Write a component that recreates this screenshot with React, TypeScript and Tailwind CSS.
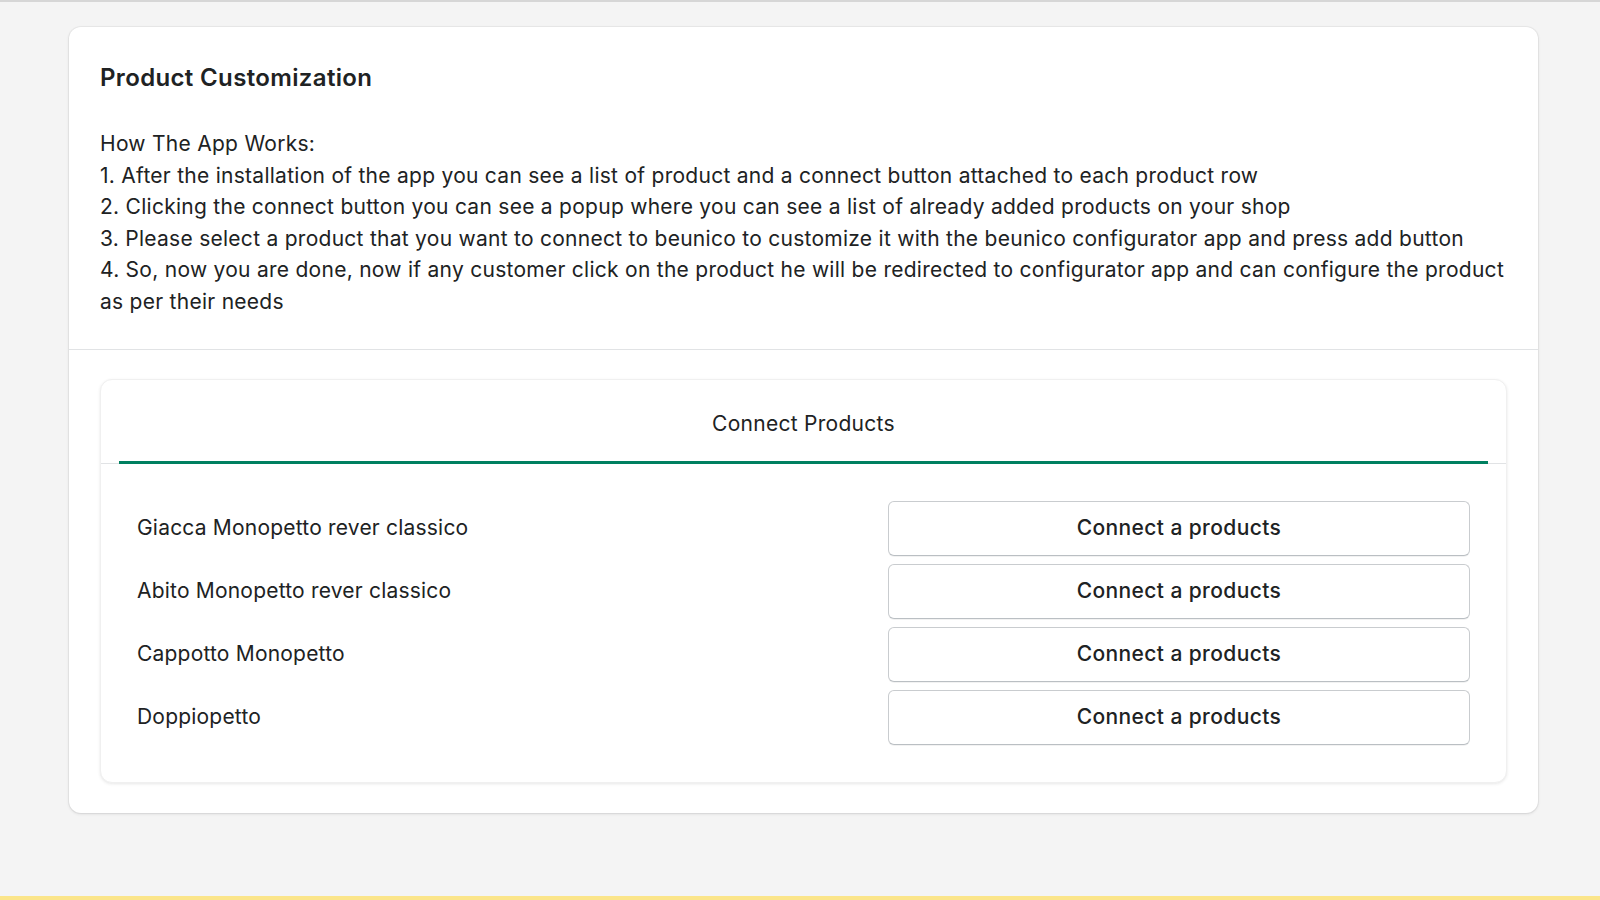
export default function App() {
  const products = [
    "Giacca Monopetto rever classico",
    "Abito Monopetto rever classico",
    "Cappotto Monopetto",
    "Doppiopetto",
  ];

  return (
    <div
      className="h-screen flex flex-col bg-[#f4f4f4] border-t-2 border-[#d6d6d6] text-[#202223]"
      style={{ fontFamily: "Inter, 'Noto Sans', sans-serif" }}
    >
      <div className="flex-1 pt-[25px]">
        <div className="ml-[69px] w-[1469px] bg-white rounded-[12px] shadow-[0_0_0_1px_rgba(63,63,68,0.05),0_1px_3px_0_rgba(63,63,68,0.15)]">
          <section className="px-[31px] pt-[35px] pb-[31px]">
            <h1 className="text-[24px] leading-[32px] font-semibold tracking-[0.35px]">Product Customization</h1>
            <div className="mt-[34px] text-[21px] leading-[31.6px] tracking-[0.27px]">
              <p>How The App Works:</p>
              <p>1. After the installation of the app you can see a list of product and a connect button attached to each product row</p>
              <p>2. Clicking the connect button you can see a popup where you can see a list of already added products on your shop</p>
              <p>3. Please select a product that you want to connect to beunico to customize it with the beunico configurator app and press add button</p>
              <p>
                4. So, now you are done, now if any customer click on the product he will be redirected to configurator app and can configure the product as per their needs
              </p>
            </div>
          </section>

          <section className="border-t border-[#e1e3e5] px-[31px] pt-[29px] pb-[30px]">
            <div className="rounded-[12px] border border-[#f0f0f0] bg-white shadow-[0_1px_3px_0_rgba(63,63,68,0.12)]">
              <div className="border-b border-[#e1e3e5] px-[18px]">
                <button className="w-full h-[84px] -mb-px flex justify-center pt-[32px] border-b-[3px] border-[#008060] text-[21px] leading-[24px] tracking-[0.28px]">
                  Connect Products
                </button>
              </div>

              <div className="px-[36px] pt-[37px] pb-[37px] flex flex-col gap-[8px]">
                {products.map((name) => (
                  <div key={name} className="flex items-center justify-between h-[55px]">
                    <span className="text-[21px] tracking-[0.2px]">{name}</span>
                    <button className="w-[582px] h-[55px] rounded-[6px] border border-[#c9cccf] border-b-[#babfc3] bg-white shadow-[0_1px_0_rgba(0,0,0,0.05)] text-[21px] font-medium tracking-[0.4px]">
                      Connect a products
                    </button>
                  </div>
                ))}
              </div>
            </div>
          </section>
        </div>
      </div>
      <div className="h-[4px] bg-[#fbe58a]" />
    </div>
  );
}
